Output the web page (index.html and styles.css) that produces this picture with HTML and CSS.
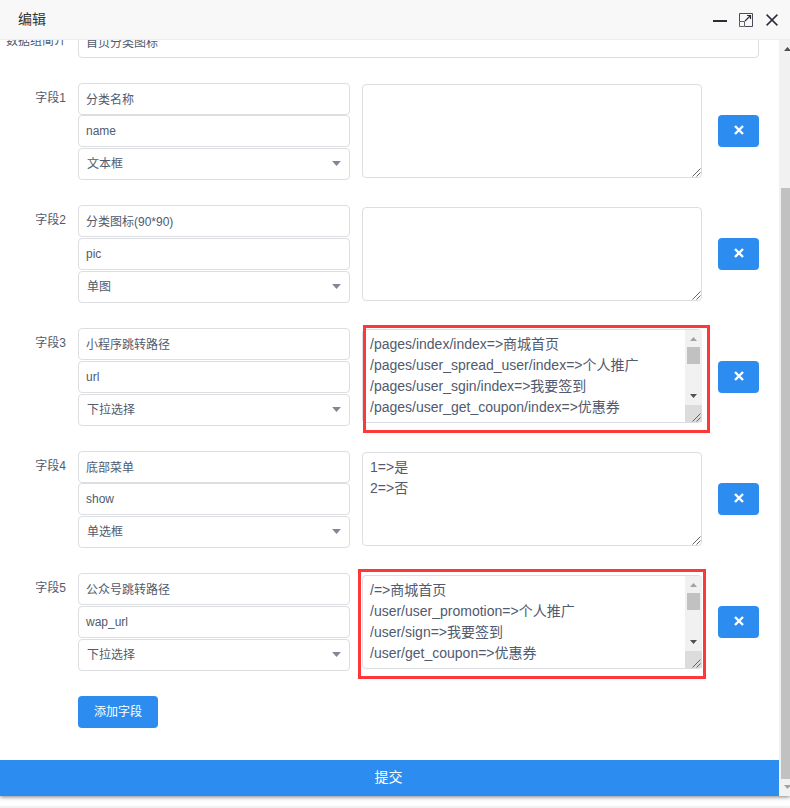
FILE: index.html
```html
<!DOCTYPE html>
<html lang="zh-CN">
<head>
<meta charset="utf-8">
<title>编辑</title>
<link rel="stylesheet" href="styles.css">
</head>
<body>
<svg width="0" height="0" class="defs">
  <symbol id="grip" viewBox="0 0 9 9"><path d="M.5 8.5l8-8M4.5 8.5l4-4" stroke="#555" stroke-width=".9" fill="none"/></symbol>
  <symbol id="cross" viewBox="0 0 10 10"><path d="M1 1l8 8M9 1l-8 8" stroke="#fff" stroke-width="2.4" fill="none"/></symbol>
  <symbol id="up" viewBox="0 0 7 4"><path d="M0 4L3.5 0L7 4z" fill="currentColor"/></symbol>
  <symbol id="down" viewBox="0 0 7 4"><path d="M0 0h7L3.5 4z" fill="currentColor"/></symbol>
</svg>
<div class="dialog">
  <header class="titlebar">
    <h1 class="title">编辑</h1>
    <div class="controls">
      <svg width="14" height="14" viewBox="0 0 14 14"><path d="M0 8h14" stroke="#2e2d3c" stroke-width="2"/></svg>
      <svg width="14" height="14" viewBox="0 0 14 14" fill="none" stroke="#2e2d3c"><path d="M.5 8V.5h13v13H6" stroke-opacity=".85"/><path d="M.5 8.5h5v5h-5z" stroke-opacity=".75"/><path d="M6 8l5.5-5.5M8 2.5h3.5V6" stroke-width="1.2"/></svg>
      <svg width="12" height="12" viewBox="0 0 12 12"><path d="M.6.6l10.8 10.8M11.4.6L.6 11.4" stroke="#2e2d3c" stroke-width="1.5"/></svg>
    </div>
  </header>
  <div class="viewport">
    <main class="form">
      <div class="intro">
        <div class="label">数据组简介</div>
        <div class="input wide">首页分类图标</div>
      </div>
      <section class="field tight">
        <div class="label">字段1</div>
        <div class="inputs"><div class="input">分类名称</div><div class="input">name</div><div class="input select">文本框<svg class="caret"><use href="#down"/></svg></div></div>
        <div class="area"><svg class="grip"><use href="#grip"/></svg></div>
        <button class="btn remove"><svg width="10" height="10"><use href="#cross"/></svg></button>
      </section>
      <section class="field lower">
        <div class="label">字段2</div>
        <div class="inputs"><div class="input">分类图标(90*90)</div><div class="input">pic</div><div class="input select">单图<svg class="caret"><use href="#down"/></svg></div></div>
        <div class="area"><svg class="grip"><use href="#grip"/></svg></div>
        <button class="btn remove"><svg width="10" height="10"><use href="#cross"/></svg></button>
      </section>
      <section class="field">
        <div class="label">字段3</div>
        <div class="inputs"><div class="input">小程序跳转路径</div><div class="input">url</div><div class="input select">下拉选择<svg class="caret"><use href="#down"/></svg></div></div>
        <div class="area">/pages/index/index=&gt;商城首页
/pages/user_spread_user/index=&gt;个人推广
/pages/user_sgin/index=&gt;我要签到
/pages/user_get_coupon/index=&gt;优惠券<div class="bar"><svg class="arrow off"><use href="#up"/></svg><i class="thumb"></i><svg class="arrow"><use href="#down"/></svg><i class="corner"></i></div><svg class="grip"><use href="#grip"/></svg><div class="mark mark-a"></div></div>
        <button class="btn remove"><svg width="10" height="10"><use href="#cross"/></svg></button>
      </section>
      <section class="field tight">
        <div class="label">字段4</div>
        <div class="inputs"><div class="input">底部菜单</div><div class="input">show</div><div class="input select">单选框<svg class="caret"><use href="#down"/></svg></div></div>
        <div class="area">1=&gt;是
2=&gt;否<svg class="grip"><use href="#grip"/></svg></div>
        <button class="btn remove"><svg width="10" height="10"><use href="#cross"/></svg></button>
      </section>
      <section class="field lower">
        <div class="label">字段5</div>
        <div class="inputs"><div class="input">公众号跳转路径</div><div class="input">wap_url</div><div class="input select">下拉选择<svg class="caret"><use href="#down"/></svg></div></div>
        <div class="area">/=&gt;商城首页
/user/user_promotion=&gt;个人推广
/user/sign=&gt;我要签到
/user/get_coupon=&gt;优惠券<div class="bar"><svg class="arrow off"><use href="#up"/></svg><i class="thumb"></i><svg class="arrow"><use href="#down"/></svg><i class="corner"></i></div><svg class="grip"><use href="#grip"/></svg><div class="mark mark-b"></div></div>
        <button class="btn remove"><svg width="10" height="10"><use href="#cross"/></svg></button>
      </section>
      <button class="btn add">添加字段</button>
      <button class="submit">提交</button>
    </main>
    <aside class="scrollbar"><svg class="arrow"><use href="#up"/></svg><i class="scroll-thumb"></i><svg class="arrow off"><use href="#down"/></svg></aside>
  </div>
</div>
</body>
</html>
```
FILE: styles.css
```css
* { box-sizing: border-box; }
body {
  margin: 0;
  height: 808px;
  overflow: hidden;
  background: linear-gradient(#fff 806px, #f1f1f1 806px);
  font: 12px/18px "Liberation Sans", "Noto Sans CJK SC", sans-serif;
  color: #515a6e;
}
svg { display: block; }
.defs { position: absolute; }
.dialog { height: 796px; background: #fff; box-shadow: 0 1px 4px rgba(0, 0, 0, .5); }
.titlebar {
  display: flex;
  align-items: center;
  justify-content: space-between;
  height: 40px;
  padding: 0 12px 0 18px;
  background: #f8f8f8;
  border-bottom: 1px solid #eee;
}
.title { margin: 0; padding-bottom: 2px; font-size: 14px; font-weight: 400; line-height: 20px; color: #333; }
.controls { display: flex; align-items: center; gap: 12px; padding-top: 1px; }
.controls svg:last-child { margin-left: 1px; }
.viewport { display: flex; height: 756px; overflow: hidden; }
.form { display: flex; flex-direction: column; flex: none; width: 779px; }
.label { flex: none; width: 78px; padding: 6px 12px 0 0; text-align: right; white-space: nowrap; }
.intro { display: flex; flex: none; margin: -14px 0 25px; }
.input {
  position: relative;
  height: 32px;
  padding: 7px 7px 0;
  border: 1px solid #dcdee2;
  border-radius: 4px;
  background: #fff;
}
.inputs .input:nth-child(2) { padding-top: 6px; }
.wide { width: 681px; }
.select { display: flex; justify-content: space-between; padding: 6px 8px 0; }
.caret { width: 9px; height: 5px; margin: 6px 0 0; color: #808695; }
.field { display: flex; flex: none; height: 98px; margin-bottom: 25px; }
.inputs { display: flex; flex-direction: column; gap: 1px; width: 272px; }
.tight { height: 97px; }
.tight .input:nth-child(2) { margin-top: -1px; }
.tight .input:nth-child(3) { margin-top: auto; }
.area {
  position: relative;
  width: 340px;
  height: 94px;
  margin: 1px 16px 0 12px;
  padding: 4px 7px;
  border: 1px solid #dcdee2;
  border-radius: 4px;
  font-size: 14px;
  line-height: 21px;
  white-space: pre;
}
.lower .area { margin-top: 2px; }
.grip { position: absolute; right: 0; bottom: 0; width: 9px; height: 9px; }
.bar {
  position: absolute;
  top: 0;
  right: -1px;
  display: flex;
  flex-direction: column;
  align-items: center;
  width: 17px;
  height: 92px;
  background: #f1f1f1;
}
.arrow { flex: none; width: 7px; height: 4px; color: #505050; }
.off { color: #a3a3a3; }
.bar .arrow { margin-top: 7px; }
.thumb { width: 13px; height: 17px; margin: 6px 0 23px; background: #c1c1c1; }
.corner { width: 17px; margin-top: 7px; flex: 1; background: #dcdcdc; }
.mark { position: absolute; border: 3px solid #ff3739; }
.mark-a { left: 0; top: -5px; width: 347px; height: 108px; }
.mark-b { left: -5px; top: -7px; width: 348px; height: 110px; }
.btn { border: 0; border-radius: 4px; padding: 0; height: 32px; background: #2d8cf0; color: #fff; font: inherit; }
.remove { display: grid; place-items: center; width: 41px; margin-top: 33px; padding-bottom: 2px; }
.tight .remove { margin-top: 32px; }
.add { flex: none; width: 80px; margin: 0 0 32px 78px; }
.submit { flex: none; height: 36px; padding: 0 2px 2px 0; border: 0; background: #2d8cf0; color: #fff; font: inherit; font-size: 14px; }
.scrollbar {
  display: flex;
  flex-direction: column;
  align-items: center;
  flex: none;
  width: 17px;
  background: #f1f1f1;
}
.scrollbar .arrow { margin-top: 7px; }
.scroll-thumb { width: 13px; height: 591px; margin-top: 137px; background: #c1c1c1; }
.scrollbar .off { margin-top: 6px; }
```
